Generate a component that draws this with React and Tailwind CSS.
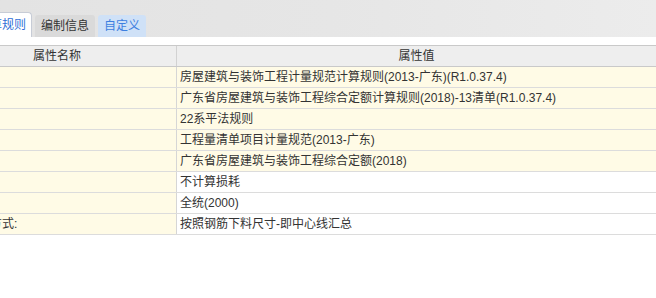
const ROWS = [
  { label: "清单规则:", value: "房屋建筑与装饰工程计量规范计算规则(2013-广东)(R1.0.37.4)", tint: true },
  { label: "定额规则:", value: "广东省房屋建筑与装饰工程综合定额计算规则(2018)-13清单(R1.0.37.4)", tint: true },
  { label: "平法规则:", value: "22系平法规则", tint: true },
  { label: "清单库:", value: "工程量清单项目计量规范(2013-广东)", tint: true },
  { label: "定额库:", value: "广东省房屋建筑与装饰工程综合定额(2018)", tint: true },
  { label: "钢筋损耗:", value: "不计算损耗", tint: false },
  { label: "钢筋报表:", value: "全统(2000)", tint: false },
  { label: "钢筋汇总方式:", value: "按照钢筋下料尺寸-即中心线汇总", tint: false },
];

export default function App() {
  return (
    <div className="h-[298px] w-[656px] overflow-hidden bg-white font-['Liberation_Sans','Noto_Sans_CJK_SC',sans-serif] text-[12px] text-[#333]">
      {/* 页签栏 */}
      <div className="flex h-[37px] items-end bg-gradient-to-r from-[#e3e3e3] via-[#e6e6e6] to-[#ececec]">
        <div className="-ml-[28px] flex items-end gap-[3px]">
          <div className="flex h-[25px] items-center rounded-tr-[4px] border border-b-0 border-[#c7ccd6] bg-white px-[5px] text-[#2f6fd6]">
            计算规则
          </div>
          <div className="flex h-[22px] w-[60px] items-center justify-center rounded-t-[3px] bg-[#dadada] text-[#333]">
            编制信息
          </div>
          <div className="flex h-[22px] w-[48px] items-center justify-center rounded-t-[3px] bg-[#cfe1f7] text-[#3d7fe0]">
            自定义
          </div>
        </div>
      </div>

      <div className="h-[8px]" />

      {/* 属性表 */}
      <div className="-ml-[62px] w-[718px]">
        <div className="grid h-[22px] grid-cols-[239px_1fr] border-y border-[#c9c9c9] bg-[#eeeeee]">
          <div className="flex items-center justify-center border-r border-[#d2d2d2]">属性名称</div>
          <div className="flex items-center justify-center">属性值</div>
        </div>
        {ROWS.map((row, i) => (
          <div key={i} className="grid h-[21px] grid-cols-[239px_1fr] border-b border-[#dcdcdc]">
            <div className="flex items-center border-r border-[#d6d6d6] bg-[#fffbe6] pl-[4px]">
              {row.label}
            </div>
            <div className={`flex items-center pl-[3px] ${row.tint ? "bg-[#fffbe6]" : "bg-white"}`}>
              {row.value}
            </div>
          </div>
        ))}
      </div>
    </div>
  );
}
